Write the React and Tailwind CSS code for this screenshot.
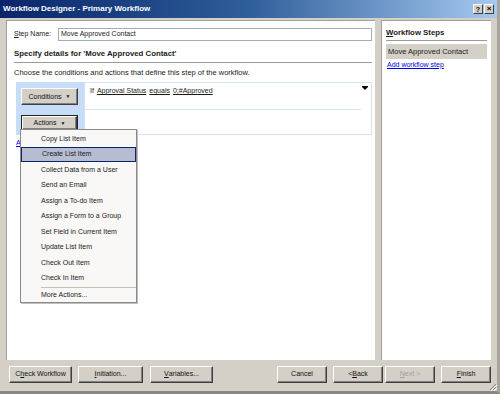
import React from "react";

const font = { fontFamily: "'Liberation Sans', Arial, sans-serif" };

function Btn({ children, className = "", disabled = false }) {
  return (
    <div
      className={`h-[17px] flex items-center justify-center bg-[#d4d0c8] border border-t-white border-l-white border-b-[#404040] border-r-[#404040] shadow-[inset_-1px_-1px_0_#808080] text-[7px] ${disabled ? "text-[#a0a0a0]" : "text-[#111]"} ${className}`}
    >
      {children}
    </div>
  );
}

const menuItems = [
  "Copy List Item",
  "Create List Item",
  "Collect Data from a User",
  "Send an Email",
  "Assign a To-do Item",
  "Assign a Form to a Group",
  "Set Field in Current Item",
  "Update List Item",
  "Check Out Item",
  "Check In Item",
];

export default function App() {
  return (
    <div style={font} className="w-[500px] h-[394px] bg-[#d4d0c8] relative overflow-hidden border-r-[3px] border-r-[#a8a49c] border-b-[3px] border-b-[#8a8680] flex flex-col">
      {/* Title bar */}
      <div className="h-[18px] shrink-0 bg-gradient-to-r from-[#0a246a] via-[#2f5f9a] to-[#a6caf0] flex items-center pl-[3px] pr-[3px]">
        <span className="text-white font-bold text-[8px] leading-none">Workflow Designer - Primary Workflow</span>
        <div className="ml-auto flex gap-[1px]">
          <div className="w-[10px] h-[10px] bg-[#d4d0c8] border border-t-white border-l-white border-b-[#404040] border-r-[#404040] flex items-center justify-center text-[7px] font-bold leading-none text-black">?</div>
          <div className="w-[10px] h-[10px] bg-[#d4d0c8] border border-t-white border-l-white border-b-[#404040] border-r-[#404040] flex items-center justify-center text-[8px] font-bold leading-none text-black">×</div>
        </div>
      </div>

      {/* Body */}
      <div className="flex pl-[6px] pt-[2px] gap-[6px] h-[342px] shrink-0">
        {/* Left panel */}
        <div className="w-[369px] h-full bg-white border-l border-t border-[#a0a0a0] relative pl-[7px] pr-[3px] text-[#1a1a1a]">
          <div className="flex items-center h-[13px] mt-[7px]">
            <span className="text-[7px] w-[44px]"><u>S</u>tep Name:</span>
            <div className="flex-1 h-[13px] border border-[#a5acb5] flex items-center px-[2px] text-[7px]">Move Approved Contact</div>
          </div>
          <div className="mt-[9px] text-[7.8px] font-bold leading-none">Specify details for 'Move Approved Contact'</div>
          <div className="mt-[4px] h-[1px] bg-[#9a9a9a]" />
          <div className="mt-[6px] text-[7.5px] leading-none">Choose the conditions and actions that define this step of the workflow.</div>

          {/* rule area */}
          <div className="mt-[6px] ml-[2px] flex h-[53px]">
            <div className="w-[68px] h-full bg-[#c7dcf7] flex flex-col pl-[5px] pt-[6px] gap-[10px]">
              <Btn className="w-[57px] h-[15px]">
                Conditions <span className="ml-[4px] text-[5px]">▼</span>
              </Btn>
              <div className="w-[57px] h-[16px] border border-[#222] flex">
                <Btn className="flex-1 h-full">
                  Actions <span className="ml-[4px] text-[5px]">▼</span>
                </Btn>
              </div>
            </div>
            <div className="flex-1 h-full border border-[#d3e3fa] relative">
              <div className="pl-[5px] pt-[3px] text-[7px] flex gap-[3px]">
                <span>If</span>
                <span className="underline">Approval Status</span>
                <span className="underline">equals</span>
                <span className="underline">0;#Approved</span>
              </div>
              <div className="absolute right-[3px] top-[3px] flex flex-col items-center">
                <div className="w-[6px] h-[1px] bg-black" />
                <div className="w-0 h-0 border-l-[3px] border-r-[3px] border-t-[3px] border-l-transparent border-r-transparent border-t-black" />
              </div>
              <div className="absolute left-0 right-[10px] top-[26px] h-[1px] bg-[#d3e3fa]" />
            </div>
          </div>
          <div className="mt-[3px] ml-[2px] text-[7px] text-[#0000ee] underline">Add</div>

          {/* Menu */}
          <div className="absolute left-[13px] top-[108px] w-[117px] h-[174px] bg-[#f9f8f6] border border-[#8a8a8a] shadow-[1px_1px_0_#c0c0c0] py-[1px] text-[7px] text-[#1a1a1a]">
            {menuItems.map((m) => (
              <div
                key={m}
                className={`h-[15.5px] flex items-center pl-[20px] ${m === "Create List Item" ? "bg-[#b6bdd2] border border-[#0a246a] pl-[19px]" : ""}`}
              >
                {m}
              </div>
            ))}
            <div className="ml-[20px] mt-[1px] h-[1px] bg-[#c5c2b8]" />
            <div className="h-[15px] flex items-center pl-[20px]">More Actions...</div>
          </div>
        </div>

        {/* Right panel */}
        <div className="w-[110px] h-full bg-white border-l border-t border-[#a0a0a0] px-[4px] text-[#1a1a1a]">
          <div className="mt-[8px] text-[7.8px] font-bold leading-none"><u>W</u>orkflow Steps</div>
          <div className="mt-[3px] h-[1px] bg-[#9a9a9a]" />
          <div className="mt-[3px] h-[15px] bg-[#d4d0c8] flex items-center pl-[2px] text-[7.5px]">Move Approved Contact</div>
          <div className="mt-[1px] text-[7px] text-[#0000ee] underline pl-[1px]">Add workflow step</div>
        </div>
      </div>

      {/* Buttons */}
      <div className="flex items-center pl-[9px] pt-[6px] gap-[6px]">
        <Btn className="w-[63px]">C<u>h</u>eck Workflow</Btn>
        <Btn className="w-[65px]"><u>I</u>nitiation...</Btn>
        <Btn className="w-[63px] ml-[1px]"><u>V</u>ariables...</Btn>
        <Btn className="w-[50px] ml-[58px]">Cancel</Btn>
        <Btn className="w-[50px]">&lt; <u>B</u>ack</Btn>
        <Btn className="w-[50px] -ml-[4px]" disabled><u>N</u>ext &gt;</Btn>
        <Btn className="w-[50px]"><u>F</u>inish</Btn>
      </div>

      {/* resize grip */}
      <div className="absolute right-[0px] bottom-[0px] w-[8px] h-[8px]">
        <svg width="8" height="8" viewBox="0 0 8 8">
          <path d="M7 1 L1 7 M7 4 L4 7" stroke="#808080" strokeWidth="1" />
          <path d="M8 2 L2 8 M8 5 L5 8" stroke="#ffffff" strokeWidth="1" />
        </svg>
      </div>
    </div>
  );
}
